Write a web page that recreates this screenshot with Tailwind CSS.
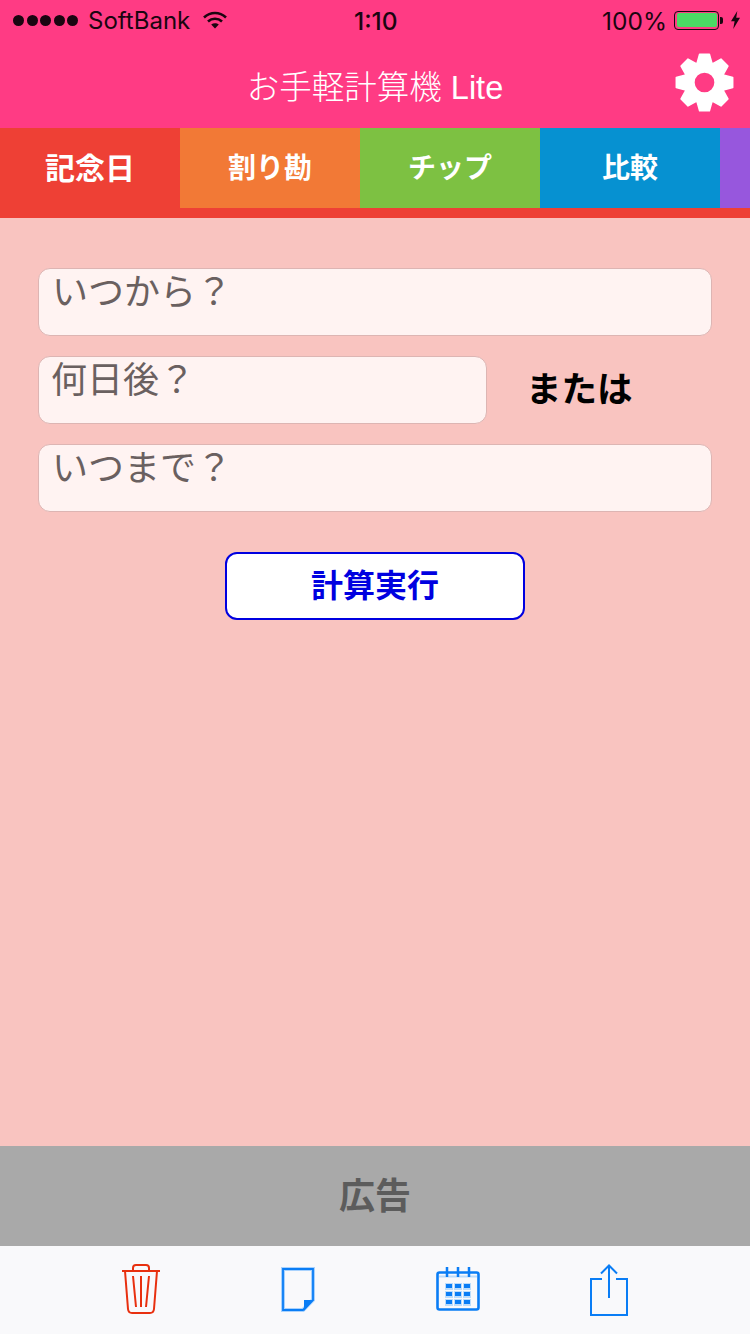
<!DOCTYPE html>
<html lang="ja">
<head>
  <meta charset="UTF-8">
  <meta name="viewport" content="width=device-width, initial-scale=1.0">
  <title>お手軽計算機 Lite</title>
  <script src="https://cdn.jsdelivr.net/npm/@tailwindcss/browser@4"></script>
</head>
<body class="bg-[#f9c4c0] font-['Liberation_Sans','Noto_Sans_CJK_JP',sans-serif]">
  <div class="w-[750px] h-[1334px] flex flex-col overflow-hidden">

    <!-- Header -->
    <header class="bg-[#ff3b84] h-[128px] shrink-0">
      <div class="h-[40px] flex items-center relative text-[#1a0510]">
        <div class="flex items-center gap-[2.5px] pl-[13px]">
          <span class="w-[11px] h-[11px] rounded-full bg-[#1a0510]"></span>
          <span class="w-[11px] h-[11px] rounded-full bg-[#1a0510]"></span>
          <span class="w-[11px] h-[11px] rounded-full bg-[#1a0510]"></span>
          <span class="w-[11px] h-[11px] rounded-full bg-[#1a0510]"></span>
          <span class="w-[11px] h-[11px] rounded-full bg-[#1a0510]"></span>
        </div>
        <span class="ml-[10px] pt-[2px] text-[24px] font-['Inter',sans-serif]">SoftBank</span>
        <svg class="ml-[13px]" width="24" height="18" viewBox="0 0 24 18" fill="none" stroke="#1a0510" stroke-width="2.6">
          <path d="M1 6.5C7.5 .5 16.5 .5 23 6.5"/>
          <path d="M5 10.5C9 6.8 15 6.8 19 10.5"/>
          <path d="M12 17.5L8.2 13.6C10.4 11.8 13.6 11.8 15.8 13.6Z" fill="#1a0510" stroke="none"/>
        </svg>
        <span class="absolute left-[354px] top-[3px] text-[24.500px] font-medium font-['Inter',sans-serif]">1:10</span>
        <div class="ml-auto flex items-center pr-[10px]">
          <span class="pt-[2px] text-[24.500px] font-['Inter',sans-serif]">100%</span>
          <div class="ml-[7px] w-[45px] h-[19px] border-[1.5px] border-[#1a0510] rounded-[4px] p-[1.5px]">
            <div class="w-full h-full rounded-[2px] bg-[#4cd964]"></div>
          </div>
          <span class="w-[3px] h-[7px] ml-[1px] bg-[#1a0510] rounded-r-[2px]"></span>
          <svg class="ml-[8px]" width="9" height="20" viewBox="0 0 10 20" fill="#1a0510">
            <path d="M7 0L0 11.5H4L2.5 20L10 7.5H5.8Z"/>
          </svg>
        </div>
      </div>
      <div class="h-[88px] flex items-center justify-between relative">
        <h1 class="w-full text-center text-white text-[32.500px] font-light pt-[8px]">お手軽計算機 Lite</h1>
        <svg class="absolute right-[16px] top-[13px]" width="59" height="59" viewBox="-30 -30 60 60" fill="white" stroke="white" stroke-width="1.5" stroke-linejoin="round">
          <circle r="15.75" fill="none" stroke-width="11.5"/>
          <path d="M-7.5 -20L-5 -28.700H5L7.5 -20Z"/>
          <path d="M-7.5 -20L-5 -28.700H5L7.5 -20Z" transform="rotate(45)"/>
          <path d="M-7.5 -20L-5 -28.700H5L7.5 -20Z" transform="rotate(90)"/>
          <path d="M-7.5 -20L-5 -28.700H5L7.5 -20Z" transform="rotate(135)"/>
          <path d="M-7.5 -20L-5 -28.700H5L7.5 -20Z" transform="rotate(180)"/>
          <path d="M-7.5 -20L-5 -28.700H5L7.5 -20Z" transform="rotate(225)"/>
          <path d="M-7.5 -20L-5 -28.700H5L7.5 -20Z" transform="rotate(270)"/>
          <path d="M-7.5 -20L-5 -28.700H5L7.5 -20Z" transform="rotate(315)"/>
        </svg>
      </div>
    </header>

    <!-- Tabs -->
    <nav class="bg-[#ee4035] h-[90px] shrink-0 overflow-hidden">
      <div class="flex h-[80px] text-white font-bold text-[28px]">
        <div class="w-[180px] shrink-0 flex items-center justify-center bg-[#ee4035] text-[30px]">記念日</div>
        <div class="w-[180px] shrink-0 flex items-center justify-center pt-[2px] bg-[#f27936]">割り勘</div>
        <div class="w-[180px] shrink-0 flex items-center justify-center pt-[2px] bg-[#7dc142]">チップ</div>
        <div class="w-[180px] shrink-0 flex items-center justify-center pt-[2px] bg-[#0691d1]">比較</div>
        <div class="w-[180px] shrink-0 bg-[#9757dd]"></div>
      </div>
    </nav>

    <!-- Form -->
    <main class="flex-1 pt-[50px] px-[38px]">
      <div class="w-[674px] h-[68px] rounded-[12px] bg-[#fff3f2] border border-[#ddb5b3] pl-[13px] text-[36px] leading-[48px] text-[#6a6060]">いつから？</div>
      <div class="mt-[20px] flex items-center">
        <div class="w-[449px] h-[68px] rounded-[12px] bg-[#fff3f2] border border-[#ddb5b3] pl-[12px] text-[36px] leading-[48px] text-[#6a6060]">何日後？</div>
        <span class="ml-[39px] pt-[2px] text-[35.500px] font-bold text-black">または</span>
      </div>
      <div class="mt-[20px] w-[674px] h-[68px] rounded-[12px] bg-[#fff3f2] border border-[#ddb5b3] pl-[13px] text-[36px] leading-[48px] text-[#6a6060]">いつまで？</div>
      <button class="block mt-[40px] ml-[187px] w-[300px] h-[68px] rounded-[12px] bg-white border-2 border-[#0000e0] text-[#0000e0] text-[32px] font-bold">計算実行</button>
    </main>

    <!-- Ad -->
    <div class="h-[100px] shrink-0 bg-[#a9a9a9] flex items-center justify-center pt-[2px] text-[36px] font-bold text-[#5c5c5c]">広告</div>

    <!-- Toolbar -->
    <footer class="h-[88px] shrink-0 bg-[#f9f9fb] flex items-start pl-[122px]">
      <svg class="mt-[18px]" width="38" height="50" viewBox="0 0 38 50" fill="none" stroke="#e8300f" stroke-width="2">
        <path d="M0 7H38" stroke-width="2.2"/>
        <path d="M11 7V4Q11 1 14 1H24Q27 1 27 4V7"/>
        <path d="M3 7L6 45Q6.4 49 10 49H28Q31.6 49 32 45L35 7"/>
        <path d="M11 12L14 43M19 12V43M27 12L24 43"/>
      </svg>
      <svg class="mt-[21px] ml-[121px]" width="34" height="45" viewBox="0 0 34 45" fill="none">
        <path d="M2 2H32V33L22 43H2Z" stroke="#a9d2fd" stroke-width="4"/>
        <path d="M2 2H32V33L22 43H2Z" stroke="#0a7df5" stroke-width="1.800"/>
        <path d="M23 33H33L23 44Z" fill="#0a7df5"/>
      </svg>
      <svg class="mt-[21px] ml-[121px]" width="44" height="44" viewBox="0 0 44 44" fill="none" stroke="#0a7df5">
        <rect x="1.5" y="5.5" width="41" height="37" rx="2" stroke-width="2.600"/>
        <path d="M3 9.500H41" stroke-width="2" stroke="#bcdcfb"/>
        <path d="M11 0V10M22 0V10M33 0V10" stroke-width="2.500"/>
        <g fill="#bcdcfb" stroke="none">
          <rect x="9" y="16" width="8" height="7"/><rect x="18" y="16" width="8" height="7"/><rect x="27" y="16" width="8" height="7"/>
          <rect x="9" y="24" width="8" height="7"/><rect x="18" y="24" width="8" height="7"/><rect x="27" y="24" width="8" height="7"/>
          <rect x="9" y="32" width="8" height="7"/><rect x="18" y="32" width="8" height="7"/><rect x="27" y="32" width="8" height="7"/>
        </g>
        <g fill="#0a7df5" stroke="none">
          <rect x="10" y="17" width="6" height="4"/><rect x="19" y="17" width="6" height="4"/><rect x="28" y="17" width="6" height="4"/>
          <rect x="10" y="25" width="6" height="4"/><rect x="19" y="25" width="6" height="4"/><rect x="28" y="25" width="6" height="4"/>
          <rect x="10" y="33" width="6" height="4"/><rect x="19" y="33" width="6" height="4"/><rect x="28" y="33" width="6" height="4"/>
        </g>
      </svg>
      <svg class="mt-[18px] ml-[110px]" width="38" height="52" viewBox="0 0 38 52" fill="none" stroke="#0a7df5" stroke-width="2">
        <path d="M12 15H1V51H37V15H26"/>
        <path d="M19 1V34"/>
        <path d="M11 9.500L19 1.500L27 9.500"/>
      </svg>
    </footer>
  </div>
</body>
</html>
